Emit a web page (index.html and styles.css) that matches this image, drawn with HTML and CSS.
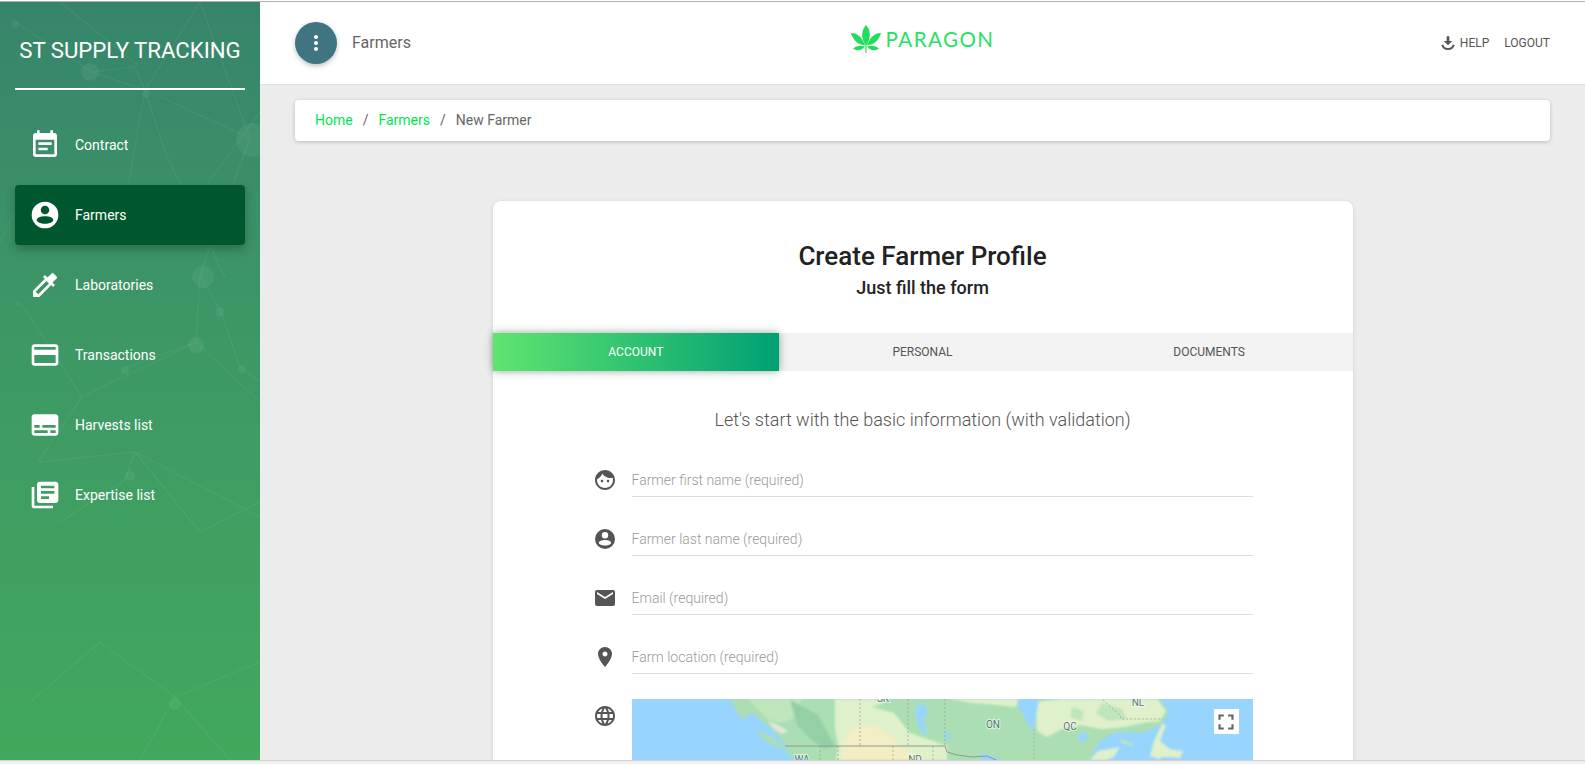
FILE: index.html
```html
<!DOCTYPE html>
<html lang="en">
<head>
<meta charset="utf-8">
<title>Create Farmer Profile</title>
<link rel="stylesheet" href="styles.css">
</head>
<body>
<div class="topline"></div>
<div class="app">
  <aside class="sidebar">
    <svg class="network" viewBox="0 0 260 758" aria-hidden="true">
      <g class="net-lines">
        <path d="M15 20L92 70L145 88L135 65L92 70M145 88L250 136M145 88L200 0M145 88L165 150L225 275M200 0L250 136M140 65L60 0M145 88L125 200M250 136L200 273L196 340L125 366M200 273L220 308L240 365L260 380M196 340L260 400M196 340L82 395L38 460L135 450M82 395L20 300M135 450L260 515M135 450L200 530L260 500M135 450L125 478L60 520M175 695L100 640L30 700M175 695L260 660M175 695L230 758M175 695L140 758M260 110L205 185M30 180L0 240"/>
      </g>
      <g class="net-dots">
        <circle cx="15" cy="22" r="4"/><circle cx="90" cy="70" r="9"/><circle cx="146" cy="92" r="4"/>
        <circle cx="253" cy="138" r="17"/><circle cx="203" cy="275" r="11"/><circle cx="220" cy="310" r="5"/>
        <circle cx="196" cy="343" r="8"/><circle cx="125" cy="368" r="4"/><circle cx="242" cy="367" r="4"/>
        <circle cx="18" cy="302" r="2"/><circle cx="130" cy="474" r="5"/><circle cx="175" cy="702" r="6"/>
      </g>
    </svg>
    <h1 class="brand">ST SUPPLY TRACKING</h1>
    <nav class="menu">
      <a class="menu-item"><svg class="menu-icon" viewBox="0 0 24 24"><path d="M17 10H7v2h10v-2zm2-7h-1V1h-2v2H8V1H6v2H5c-1.11 0-1.99.9-1.99 2L3 19c0 1.1.89 2 2 2h14c1.1 0 2-.9 2-2V5c0-1.1-.9-2-2-2zm0 16H5V8h14v11zm-5-5H7v2h7v-2z"/></svg>Contract</a>
      <a class="menu-item active"><svg class="menu-icon" viewBox="0 0 24 24"><path fill-rule="evenodd" d="M12 2a10 10 0 1 0 0 20a10 10 0 1 0 0-20zM12 5a3.2 3.2 0 1 1 0 6.4a3.2 3.2 0 1 1 0-6.4zM12 12.9c3.4 0 6.2 1.2 6.2 2.8s-2.8 2.8-6.2 2.8s-6.2-1.2-6.2-2.8s2.8-2.8 6.2-2.8z"/></svg>Farmers</a>
      <a class="menu-item"><svg class="menu-icon" viewBox="0 0 24 24"><path d="M20.71 5.63l-2.34-2.34c-.39-.39-1.02-.39-1.41 0l-3.12 3.12-1.93-1.91-1.41 1.41 1.42 1.42L3 16.25V21h4.75l8.92-8.92 1.42 1.42 1.41-1.41-1.92-1.92 3.12-3.12c.4-.4.4-1.03.01-1.42zM6.92 19L5 17.08l8.06-8.06 1.92 1.92L6.92 19z"/></svg>Laboratories</a>
      <a class="menu-item"><svg class="menu-icon" viewBox="0 0 24 24"><path d="M20 4H4c-1.11 0-1.99.89-1.99 2L2 18c0 1.11.89 2 2 2h16c1.11 0 2-.89 2-2V6c0-1.11-.89-2-2-2zm0 14H4v-6h16v6zm0-10H4V6h16v2z"/></svg>Transactions</a>
      <a class="menu-item"><svg class="menu-icon" viewBox="0 0 24 24"><path d="M20 4H4c-1.1 0-2 .9-2 2v12c0 1.1.9 2 2 2h16c1.1 0 2-.9 2-2V6c0-1.1-.9-2-2-2zM4 12h4v2H4v-2zm10 6H4v-2h10v2zm6 0h-4v-2h4v2zm0-4H10v-2h10v2z"/></svg>Harvests list</a>
      <a class="menu-item"><svg class="menu-icon" viewBox="0 0 24 24"><path d="M4 6H2v14c0 1.1.9 2 2 2h14v-2H4V6zm16-4H8c-1.1 0-2 .9-2 2v12c0 1.1.9 2 2 2h12c1.1 0 2-.9 2-2V4c0-1.1-.9-2-2-2zm-1 9H9V9h10v2zm-4 4H9v-2h6v2zm4-8H9V5h10v2z"/></svg>Expertise list</a>
    </nav>
  </aside>
  <main class="main">
    <header class="header">
      <div class="header-left">
        <button class="round-btn" type="button"><svg class="dots" viewBox="0 0 24 24"><path d="M12 8c1.1 0 2-.9 2-2s-.9-2-2-2-2 .9-2 2 .9 2 2 2zm0 2c-1.1 0-2 .9-2 2s.9 2 2 2 2-.9 2-2-.9-2-2-2zm0 6c-1.1 0-2 .9-2 2s.9 2 2 2 2-.9 2-2-.9-2-2-2z"/></svg></button>
        <span class="header-title">Farmers</span>
      </div>
      <div class="logo">
        <svg class="logo-mark" viewBox="0 0 30 28" aria-hidden="true">
          <path d="M15 0C10.500 5 9.500 12 14.600 20.500H15.400C20.500 12 19.500 5 15 0z"/>
          <path d="M0 8C4 7.500 10.500 10 14 20.500C7 20 2 15 0 8z"/>
          <path d="M30 8C26 7.500 19.500 10 16 20.500C23 20 28 15 30 8z"/>
          <path d="M2 23.500C5.500 20.500 10 20 14 21.500C11 25.500 6 26.500 2 23.500z"/>
          <path d="M28 23.500C24.500 20.500 20 20 16 21.500C19 25.500 24 26.500 28 23.500z"/>
          <path d="M14.400 20.500h1.200V28h-1.200z"/>
        </svg>
        <span class="logo-text">PARAGON</span>
      </div>
      <nav class="header-right">
        <a class="header-link"><svg class="help-icon" viewBox="0 0 24 24"><path d="M10 2h4v7h4.500L12 15.500L5.500 9H10z"/><path class="help-arc" d="M3.500 14.500C4.500 19 8 21 12 21s7.500-2 8.500-6.500"/></svg>HELP</a>
        <a class="header-link">LOGOUT</a>
      </nav>
    </header>
    <div class="content">
      <ol class="breadcrumb">
        <li class="crumb-link">Home</li>
        <li class="crumb-sep">/</li>
        <li class="crumb-link">Farmers</li>
        <li class="crumb-sep">/</li>
        <li class="crumb-current">New Farmer</li>
      </ol>
      <section class="card">
        <h2 class="card-title">Create Farmer Profile</h2>
        <h3 class="card-sub">Just fill the form</h3>
        <div class="tabs">
          <div class="tab active">ACCOUNT</div>
          <div class="tab">PERSONAL</div>
          <div class="tab">DOCUMENTS</div>
        </div>
        <p class="lead">Let's start with the basic information (with validation)</p>
        <div class="form">
          <div class="field">
            <svg class="field-icon" viewBox="0 0 24 24"><path d="M9 11.750c-.69 0-1.250.56-1.250 1.250s.56 1.250 1.250 1.250 1.250-.56 1.250-1.250-.56-1.250-1.250-1.250zm6 0c-.69 0-1.250.56-1.250 1.250s.56 1.250 1.250 1.250 1.250-.56 1.250-1.250-.56-1.250-1.250-1.250zM12 2C6.480 2 2 6.480 2 12s4.480 10 10 10 10-4.480 10-10S17.520 2 12 2zm0 18c-4.410 0-8-3.590-8-8 0-.29.02-.58.05-.86 2.360-1.050 4.230-2.980 5.210-5.370C11.070 8.330 14.050 10 17.420 10c.78 0 1.530-.09 2.250-.26.21.71.33 1.470.33 2.260 0 4.410-3.590 8-8 8z"/></svg>
            <div class="input">Farmer first name (required)</div>
          </div>
          <div class="field">
            <svg class="field-icon" viewBox="0 0 24 24"><path fill-rule="evenodd" d="M12 2a10 10 0 1 0 0 20a10 10 0 1 0 0-20zM12 5a3.200 3.200 0 1 1 0 6.400a3.200 3.200 0 1 1 0-6.400zM12 12.900c3.400 0 6.200 1.200 6.200 2.800s-2.800 2.800-6.200 2.800s-6.200-1.200-6.200-2.800s2.800-2.800 6.200-2.800z"/></svg>
            <div class="input">Farmer last name (required)</div>
          </div>
          <div class="field">
            <svg class="field-icon" viewBox="0 0 24 24"><path d="M20 4H4c-1.100 0-1.990.9-1.990 2L2 18c0 1.100.9 2 2 2h16c1.100 0 2-.9 2-2V6c0-1.100-.9-2-2-2zm0 4l-8 5-8-5V6l8 5 8-5v2z"/></svg>
            <div class="input">Email (required)</div>
          </div>
          <div class="field">
            <svg class="field-icon" viewBox="0 0 24 24"><path d="M12 2C8.130 2 5 5.130 5 9c0 5.250 7 13 7 13s7-7.750 7-13c0-3.870-3.130-7-7-7zm0 9.500c-1.380 0-2.500-1.120-2.500-2.500s1.120-2.500 2.500-2.500 2.500 1.120 2.500 2.500-1.120 2.500-2.500 2.500z"/></svg>
            <div class="input">Farm location (required)</div>
          </div>
          <div class="map-row">
            <svg class="field-icon globe" viewBox="0 0 24 24"><path d="M11.990 2C6.470 2 2 6.480 2 12s4.470 10 9.990 10C17.520 22 22 17.520 22 12S17.520 2 11.990 2zm6.930 6h-2.950c-.32-1.250-.78-2.450-1.380-3.560 1.840.63 3.370 1.910 4.330 3.560zM12 4.040c.83 1.200 1.480 2.530 1.910 3.960h-3.820c.43-1.430 1.080-2.760 1.910-3.960zM4.260 14C4.100 13.360 4 12.690 4 12s.1-1.360.26-2h3.380c-.08.66-.14 1.320-.14 2 0 .68.06 1.340.14 2H4.260zm.82 2h2.950c.32 1.250.78 2.450 1.380 3.560-1.840-.63-3.370-1.900-4.330-3.560zm2.950-8H5.080c.96-1.660 2.490-2.930 4.330-3.560C8.810 5.550 8.350 6.750 8.030 8zM12 19.960c-.83-1.200-1.480-2.530-1.910-3.960h3.820c-.43 1.430-1.080 2.760-1.910 3.960zM14.340 14H9.660c-.09-.66-.16-1.320-.16-2 0-.68.07-1.350.16-2h4.680c.09.65.16 1.320.16 2 0 .68-.07 1.340-.16 2zm.25 5.560c.6-1.110 1.060-2.310 1.380-3.560h2.950c-.96 1.650-2.490 2.930-4.330 3.560zM16.360 14c.08-.66.14-1.320.14-2 0-.68-.06-1.340-.14-2h3.380c.16.64.26 1.310.26 2s-.1 1.360-.26 2h-3.380z"/></svg>
            <div class="map">
              <svg class="map-art" viewBox="0 0 621 300" aria-hidden="true">
                <defs><filter id="soft" x="-5%" y="-5%" width="110%" height="110%"><feGaussianBlur stdDeviation="1"/></filter></defs>
                <g filter="url(#soft)">
                  <path class="land-green" d="M98 0L104 12L110 20L121 14L130 22L148 38L156 46L154 54L165 61V80H458L458 61L468 41L485 33L511 34L531 24L536 11L528 0z"/>
                  <path class="land-green" d="M125 31L140 38L155 50L146 49L132 41z"/>
                  <path class="land-light" d="M116 0H170L160 20L150 24L136 20L124 8z"/>
                  <path class="land-mid" d="M158 1L172 8L186 16L197 36L203 47L192 50L178 40L165 26z"/>
                  <path class="land-green" d="M136 24L165 30L178 46L185 61H165L152 45z"/>
                  <path class="land-white" d="M136 22L144 25L156 32L150 35L142 30z"/>
                  <path class="land-pale" d="M203 0H262L240 8L262 14L278 34L315 47V61H204L206 47L203 30z"/>
                  <path class="land-tan" d="M218 30L240 26L262 38L268 47L290 61H210L210 46z"/>
                  <path class="land-green" d="M240 0H315L312 14L296 6L286 4L272 14L262 6z"/>
                  <path class="land-pale" d="M318 0H386L384 8L366 6L340 4z"/>
                  <path class="land-pale" d="M404 3L430 0H525L534 12L528 22L510 24L492 28L470 30L448 26L430 30L415 38L405 32z"/>
                  <path class="land-light" d="M440 8L452 12L450 22L438 18z"/>
                  <path class="land-light" d="M470 4L490 10L495 20L476 22L464 14z"/>
                  <path class="water" d="M386 0H407L404 18L402 31L396 27L392 16L386 9z"/>
                  <path class="water" d="M283 8L292 5L296 14L291 20L296 36L290 34L285 22z"/>
                  <path class="water" d="M314 32L319 36L316 42L312 38z"/>
                  <path class="water" d="M446 36L454 32L455 42L447 42z"/>
                  <path class="water" d="M348 54L368 60L372 66H352z"/>
                  <path class="land-pale" d="M458 61L466 52L488 48L482 58L474 61z"/>
                  <path class="land-light" d="M488 40L500 44L501 47L490 44z"/>
                  <path class="land-pale" d="M530 25L534 26L528 42L538 50L551 52L548 59L532 58L526 60L518 57L522 42z"/>
                </g>
                <path class="map-dash" d="M228 0V47M276 0V47M313 0V47M261 47V61M301 47V61M188 47V61M206 47V61M402 30V61M471 1L488 16L489 20H531"/>
                <path class="map-border" d="M153 47H313L315 53L325 56L340 58L355 57L366 62"/>
                <text class="map-label" x="251" y="3">SK</text>
                <text class="map-label" x="361" y="29">ON</text>
                <text class="map-label" x="438" y="31">QC</text>
                <text class="map-label" x="506" y="7">NL</text>
                <text class="map-label" x="170" y="64">WA</text>
                <text class="map-label" x="283" y="64">ND</text>
              </svg>
              <button class="fullscreen" type="button"><svg class="fullscreen-icon" viewBox="0 0 24 24"><path d="M7 14H5v5h5v-2H7v-3zm-2-4h2V7h3V5H5v5zm12 7h-3v2h5v-5h-2v3zM14 5v2h3v3h2V5h-5z"/></svg></button>
            </div>
          </div>
        </div>
      </section>
    </div>
  </main>
</div>
<div class="bottomstrip"></div>
</body>
</html>
```
FILE: styles.css
```css
* { box-sizing: border-box; }
html, body { height: 100%; }
body {
  margin: 0;
  height: 764px;
  overflow: hidden;
  display: flex;
  flex-direction: column;
  font-family: Roboto, "Liberation Sans", sans-serif;
  background: #ececec;
  color: #555;
}
.topline { height: 2px; background: #fff; border-bottom: 1px solid #b0b0b0; flex: none; }
.bottomstrip { height: 4px; background: #efefef; border-top: 1px solid #d4d4d4; flex: none; }
.app { flex: 1; min-height: 0; display: flex; overflow: hidden; }

/* Sidebar */
.sidebar {
  position: relative;
  width: 260px;
  flex: none;
  padding: 0 15px;
  background: linear-gradient(180deg, #36856b 0%, #3d9865 45%, #42a85d 100%);
  color: #fff;
  overflow: hidden;
}
.network { position: absolute; left: 0; top: 0; width: 260px; height: 758px; }
.net-lines path { fill: none; stroke: #fff; stroke-opacity: .06; stroke-width: 1.2; }
.net-dots circle { fill: #fff; fill-opacity: .06; }
.brand {
  position: relative;
  margin: 0 0 25px;
  height: 88px;
  padding-top: 33px;
  border-bottom: 2px solid #fff;
  font-size: 22.200px;
  line-height: 30px;
  font-weight: 400;
  text-align: center;
  white-space: nowrap;
}
.menu { position: relative; display: flex; flex-direction: column; gap: 10px; }
.menu-item {
  display: flex;
  align-items: center;
  gap: 14px;
  height: 60px;
  padding-left: 14px;
  border-radius: 4px;
  font-size: 14px;
  color: #fff;
}
.menu-item.active { background: #00572d; box-shadow: 0 4px 10px rgba(0, 0, 0, .25); }
.menu-icon { width: 32px; height: 32px; fill: #fff; flex: none; }

/* Main column */
.main { flex: 1; min-width: 0; display: flex; flex-direction: column; }
.header {
  flex: none;
  height: 83px;
  display: grid;
  grid-template-columns: 1fr auto 1fr;
  align-items: center;
  padding: 0 35px;
  background: #fff;
  border-bottom: 1px solid #e0e0e0;
}
.header-left { display: flex; align-items: center; gap: 15px; }
.round-btn {
  width: 42px;
  height: 42px;
  padding: 0;
  display: flex;
  align-items: center;
  justify-content: center;
  border: 0;
  border-radius: 50%;
  background: #3e7580;
  box-shadow: 0 2px 5px rgba(0, 0, 0, .25);
}
.dots { width: 24px; height: 24px; fill: #fff; }
.header-title { font-size: 16px; color: #666; padding-bottom: 2px; }
.logo { display: flex; align-items: center; gap: 5px; margin-bottom: 9px; }
.logo-mark { width: 30px; height: 28px; fill: #22dd5c; }
.logo-text {
  font-family: Lato, Roboto, sans-serif;
  font-size: 20.600px;
  font-weight: 400;
  letter-spacing: 1.400px;
  color: #2ae063;
}
.header-right { display: flex; justify-content: flex-end; align-items: center; gap: 15px; }
.header-link { display: flex; align-items: center; gap: 4px; font-size: 12px; color: #555; }
.help-icon { width: 16px; height: 18px; fill: #555; }
.help-arc { fill: none; stroke: #555; stroke-width: 3; }

/* Content */
.content { flex: 1; min-height: 0; padding: 15px 35px 0; }
.breadcrumb {
  display: flex;
  align-items: center;
  gap: 10px;
  height: 41px;
  margin: 0;
  padding: 0 20px 2px;
  list-style: none;
  background: #fff;
  border-radius: 4px;
  box-shadow: 0 1px 4px rgba(0, 0, 0, .2);
  font-size: 14px;
}
.crumb-link { color: #00e64f; }
.crumb-sep, .crumb-current { color: #666; }

.card {
  width: 860px;
  margin: 60px auto 0;
  padding-top: 40px;
  background: #fff;
  border-radius: 8px;
  box-shadow: 0 1px 4px rgba(0, 0, 0, .12);
  text-align: center;
}
.card-title { margin: 0; font-size: 26px; line-height: 31px; font-weight: 500; color: #222; }
.card-sub { margin: 4px 0 33px; font-size: 18px; line-height: 24px; font-weight: 500; color: #222; }
.tabs { display: grid; grid-template-columns: repeat(3, 1fr); height: 38px; background: #f3f3f3; }
.tab { display: flex; align-items: center; justify-content: center; font-size: 12px; color: #555; }
.tab.active {
  position: relative;
  color: #fff;
  background: linear-gradient(90deg, #5fe46f 0%, #00a074 100%);
  box-shadow: 0 0 8px rgba(0, 60, 30, .45);
}
.lead { margin: 36px 0 5px; font-size: 18px; line-height: 26px; font-weight: 300; color: #555; }
.form { padding: 0 100px; text-align: left; }
.field { display: flex; align-items: flex-end; gap: 15px; height: 59px; }
.field-icon { width: 24px; height: 24px; fill: #555; flex: none; margin-bottom: 5px; }
.input {
  flex: 1;
  height: 34px;
  line-height: 34px;
  border-bottom: 1px solid #ddd;
  font-size: 14px;
  font-weight: 300;
  color: #9a9a9a;
}
.map-row { display: flex; gap: 15px; margin-top: 25px; }
.globe { margin: 5px 0 0; }
.map { position: relative; flex: 1; height: 300px; background: #97d5fe; overflow: hidden; }
.map-art { display: block; width: 621px; height: 300px; }
.land-green { fill: #abdfb3; }
.land-mid { fill: #94d0a5; }
.land-light { fill: #bfe5bc; }
.land-white { fill: #dfe8dc; }
.land-pale { fill: #dff1ca; }
.land-tan { fill: #f3eec4; }
.water { fill: #97d5fe; }
.map-dash { fill: none; stroke: #9aa59a; stroke-width: .8; stroke-dasharray: 2 2; }
.map-border { fill: none; stroke: #8e9a96; stroke-width: 1; }
.map-label {
  font-size: 10px;
  fill: #557571;
  text-anchor: middle;
  paint-order: stroke;
  stroke: rgba(255, 255, 255, .6);
  stroke-width: 2px;
}
.fullscreen {
  position: absolute;
  top: 10px;
  right: 14px;
  width: 25px;
  height: 25px;
  padding: 0;
  display: flex;
  align-items: center;
  justify-content: center;
  border: 0;
  background: #fff;
}
.fullscreen-icon { width: 26px; height: 26px; fill: #666; flex: none; }
```
